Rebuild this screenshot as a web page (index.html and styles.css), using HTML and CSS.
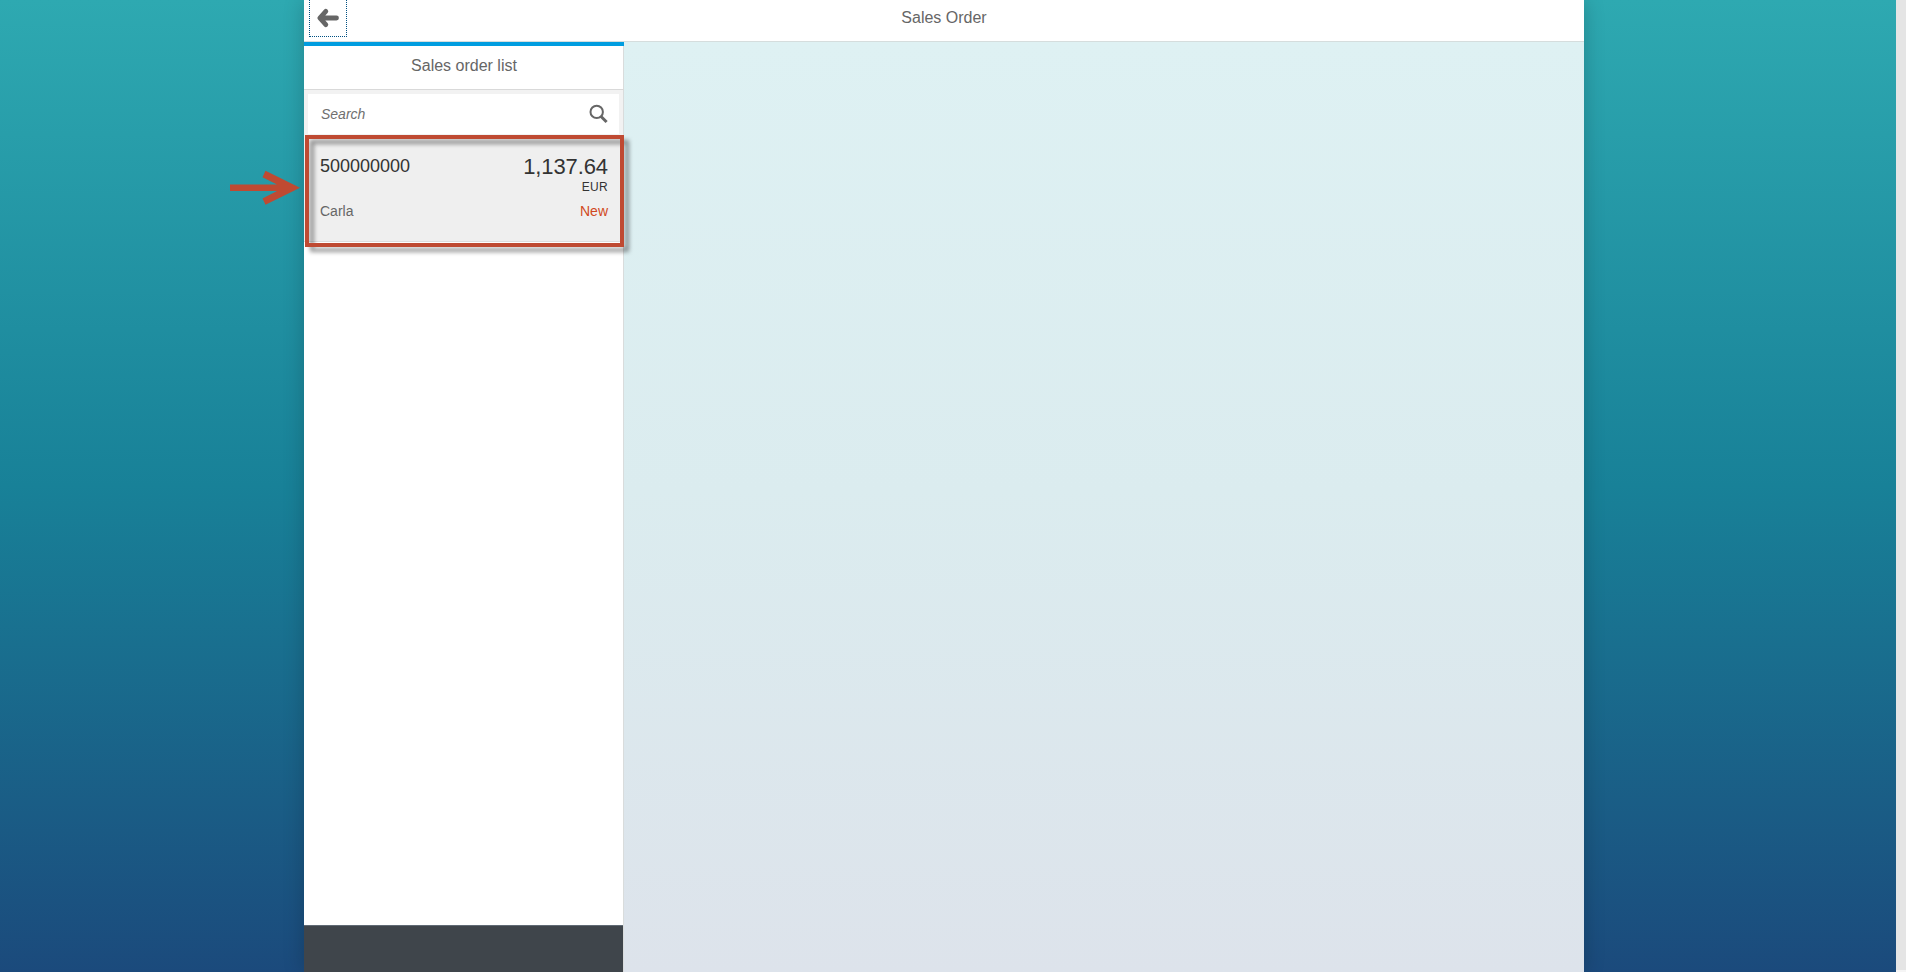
FILE: index.html
```
<!DOCTYPE html>
<html lang="en">
<head>
<meta charset="utf-8">
<title>Sales Order</title>
<link rel="stylesheet" href="styles.css">
</head>
<body>
<div class="shell">
  <main class="app">
    <header class="app-header">
      <button class="back" aria-label="Back">
        <svg width="24" height="20" viewBox="0 0 24 20"><path d="M4.5 10H20.5M9.8 3.4L3.8 10L9.8 16.6" fill="none" stroke="#666" stroke-width="4.8" stroke-linecap="round" stroke-linejoin="round"/></svg>
      </button>
      <h1 class="app-title">Sales Order</h1>
    </header>
    <div class="split">
      <aside class="master">
        <h2 class="master-title">Sales order list</h2>
        <div class="search-bar">
          <label class="search"><span>Search</span>
            <svg width="20" height="20" viewBox="0 0 20 20" fill="none" stroke="#666"><circle cx="7.7" cy="7.9" r="6.2" stroke-width="2"/><path d="M11.8 12.2L17.6 18" stroke-width="3"/></svg>
          </label>
        </div>
        <article class="item">
          <div class="item-head">
            <span class="order-id">500000000</span>
            <div class="amount"><span class="value">1,137.64</span><span class="unit">EUR</span></div>
          </div>
          <div class="item-foot"><span>Carla</span><span class="status">New</span></div>
          <div class="highlight"></div>
          <svg class="pointer" width="72" height="36" viewBox="0 0 72 36"><path d="M0 14.5H47L32.5 7.2L35.5 .8L70 17.7L35.5 34.8L32.5 28.4L47 21H0Z" fill="#bf4a32"/></svg>
        </article>
        <footer class="master-footer"></footer>
      </aside>
      <section class="detail"></section>
    </div>
  </main>
  <div class="scroll-track"></div>
</div>
</body>
</html>
```
FILE: styles.css
```
* { box-sizing: border-box; }
body { margin: 0; font-family: "Liberation Sans", Arial, sans-serif; color: #666; }
.shell {
  height: 972px;
  padding-left: 304px;
  display: flex;
  justify-content: space-between;
  overflow: hidden;
  background: linear-gradient(to bottom, #2ea9b1 0%, #188198 50%, #1b4a7c 100%);
}
.app {
  width: 1280px;
  display: flex;
  flex-direction: column;
  box-shadow: 0 0 20px rgba(0, 0, 0, .2);
}
.app-header {
  height: 42px;
  flex: none;
  display: grid;
  grid-template-columns: 48px 1fr 48px;
  background: #fff;
  border-bottom: 1px solid #d5dddd;
}
.back {
  width: 38px;
  height: 37px;
  margin-left: 5px;
  padding: 0 0 1px;
  display: flex;
  align-items: center;
  justify-content: center;
  background: none;
  border: 1px dotted #005083;
  border-top: 0;
}
.app-title, .master-title { margin: 0; font-size: 16px; font-weight: 400; text-align: center; }
.app-title { line-height: 35px; }
.split { flex: 1; display: flex; min-height: 0; }
.master {
  width: 320px;
  display: flex;
  flex-direction: column;
  background: #fff;
  border-right: 1px solid #d9dcdc;
}
.master-title {
  height: 48px;
  flex: none;
  margin-right: -1px;
  line-height: 39px;
  border-top: 4px solid #009de0;
  border-bottom: 1px solid #d9d9d9;
}
.search-bar { height: 48px; flex: none; padding: 4px 4px 4px; background: #f2f2f2; }
.search {
  height: 40px;
  padding: 0 10px 0 13px;
  display: flex;
  align-items: center;
  justify-content: space-between;
  background: #fff;
  font-size: 14px;
  font-style: italic;
  color: #707070;
}
.item {
  position: relative;
  height: 104px;
  flex: none;
  padding: 15px 15px 0 16px;
  background: #efefef;
  border-bottom: 1px solid #ddd;
}
.item-head, .item-foot { display: flex; justify-content: space-between; }
.item-head { color: #333; height: 49px; }
.order-id { font-size: 18px; line-height: 26px; }
.amount { display: flex; flex-direction: column; align-items: flex-end; }
.value { font-size: 22px; line-height: 28px; letter-spacing: -.1px; }
.unit { font-size: 12px; line-height: 13px; letter-spacing: .3px; }
.item-foot { font-size: 14px; line-height: 18px; }
.status { color: #d14922; }
.highlight {
  position: absolute;
  left: 1px;
  top: -3px;
  width: 319px;
  height: 112px;
  border: 4px solid #bf4a32;
  filter: drop-shadow(5px 5px 2px rgba(0, 0, 0, .4));
}
.pointer { position: absolute; left: -74px; top: 32px; }
.master-footer { height: 47px; flex: none; margin-top: auto; background: #3f454b; border-top: 1px solid #606a74; }
.detail { flex: 1; background: linear-gradient(to bottom, #def1f3 0%, #dbecef 48%, #dde3eb 100%); }
.scroll-track { width: 10px; background: #e5e5e5; border-bottom: 2px solid #f5f5f5; }
```
